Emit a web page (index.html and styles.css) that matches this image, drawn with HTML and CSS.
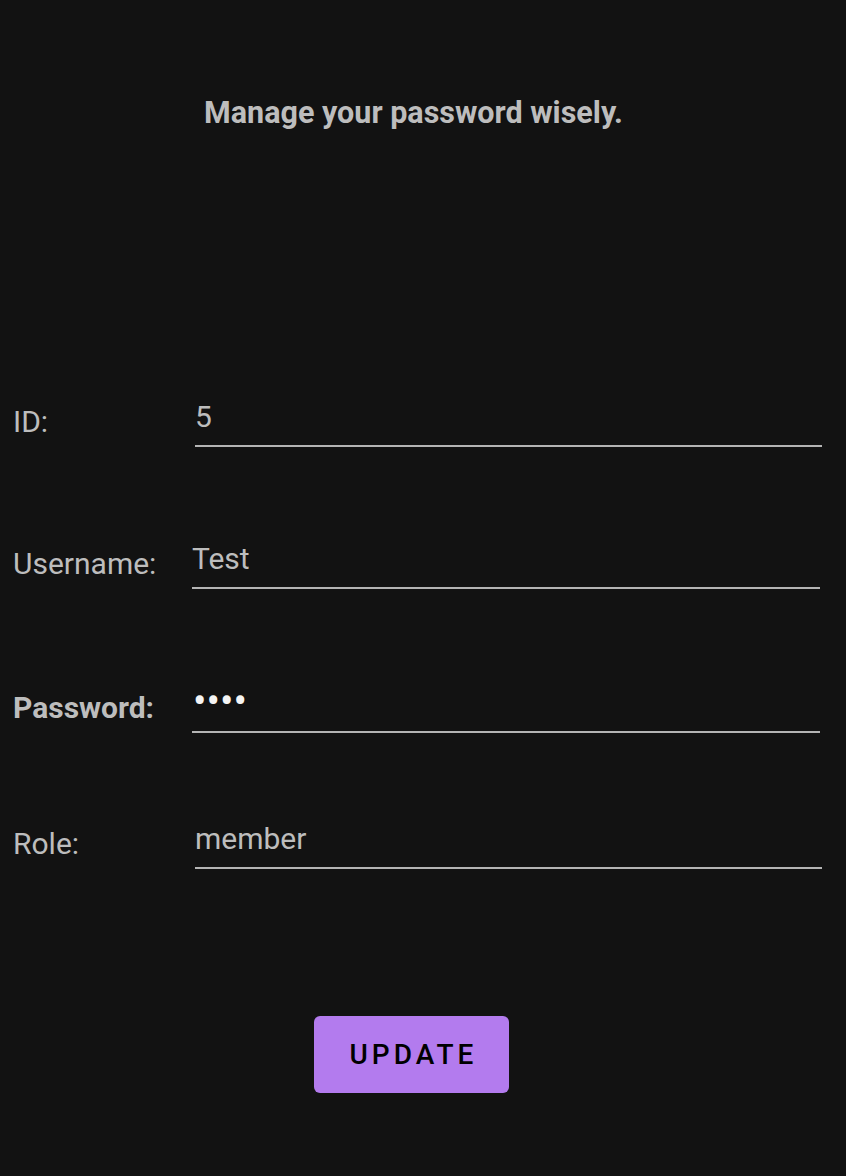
FILE: index.html
```html
<!DOCTYPE html>
<html lang="en">
<head>
    <meta charset="UTF-8">
    <meta name="viewport" content="width=device-width, initial-scale=1.0">
    <title>Manage password</title>
    <link rel="stylesheet" href="styles.css">
</head>
<body>
    <div class="screen">
        <h1 class="title">Manage your password wisely.</h1>

        <div class="form">
            <div class="row">
                <label for="id" class="label">ID:</label>
                <input type="text" id="id" class="field" value="5">
            </div>
            <div class="row row-narrow row-username">
                <label for="username" class="label">Username:</label>
                <input type="text" id="username" class="field" value="Test">
            </div>
            <div class="row row-narrow row-password">
                <label for="password" class="label label-bold">Password:</label>
                <div class="field field-password" id="password">&#8226;&#8226;&#8226;&#8226;</div>
            </div>
            <div class="row row-role">
                <label for="role" class="label">Role:</label>
                <input type="text" id="role" class="field" value="member">
            </div>
        </div>

        <div class="actions">
            <button class="button">Update</button>
        </div>
    </div>
</body>
</html>
```

FILE: styles.css
```css
html, body {
    margin: 0;
    background-color: #121212;
}
body {
    font-family: Roboto, "Noto Sans", sans-serif;
    color: #bdbdbd;
}
.screen {
    padding: 95px 24px 0 13px;
}
.title {
    margin: 0;
    padding-right: 8px;
    font-size: 30.5px;
    line-height: 36px;
    font-weight: 700;
    text-align: center;
    color: #bdbdbd;
}
.form {
    margin-top: 255px;
    display: flex;
    flex-direction: column;
    gap: 80px;
}
.row {
    display: flex;
    align-items: center;
    height: 61px;
}
.row-username {
    margin-top: 1px;
}
.row-password {
    margin-top: 3px;
}
.row-role {
    margin-top: -5px;
}
.label {
    width: 182px;
    flex-shrink: 0;
    padding-top: 10px;
    font-size: 30px;
    line-height: 36px;
}
.row-narrow .label {
    width: 179px;
}
.row-narrow .field {
    margin-right: 2px;
}
.label-bold {
    font-weight: 700;
}
.field {
    flex: 1;
    min-width: 0;
    box-sizing: border-box;
    height: 61px;
    padding: 12px 0 11px 0;
    margin: 0;
    border: none;
    border-bottom: 2px solid #b4b4b4;
    background: transparent;
    font-family: Roboto, "Noto Sans", sans-serif;
    font-size: 30px;
    line-height: 36px;
    color: #bdbdbd;
    outline: none;
}
.field-password {
    padding-top: 10px;
    padding-left: 1px;
    overflow: hidden;
    color: #f4f4f4;
    font-size: 40px;
    line-height: 40px;
    letter-spacing: 0;
}
.actions {
    margin-top: 147px;
    display: flex;
    justify-content: center;
}
.button {
    width: 195px;
    height: 77px;
    margin-right: 12px;
    padding: 0 0 0 4px;
    border: none;
    border-radius: 6px;
    background-color: #b37bee;
    color: #000;
    font-family: Roboto, "Noto Sans", sans-serif;
    font-size: 28px;
    font-weight: 500;
    letter-spacing: 4px;
    text-transform: uppercase;
    cursor: pointer;
}
```
